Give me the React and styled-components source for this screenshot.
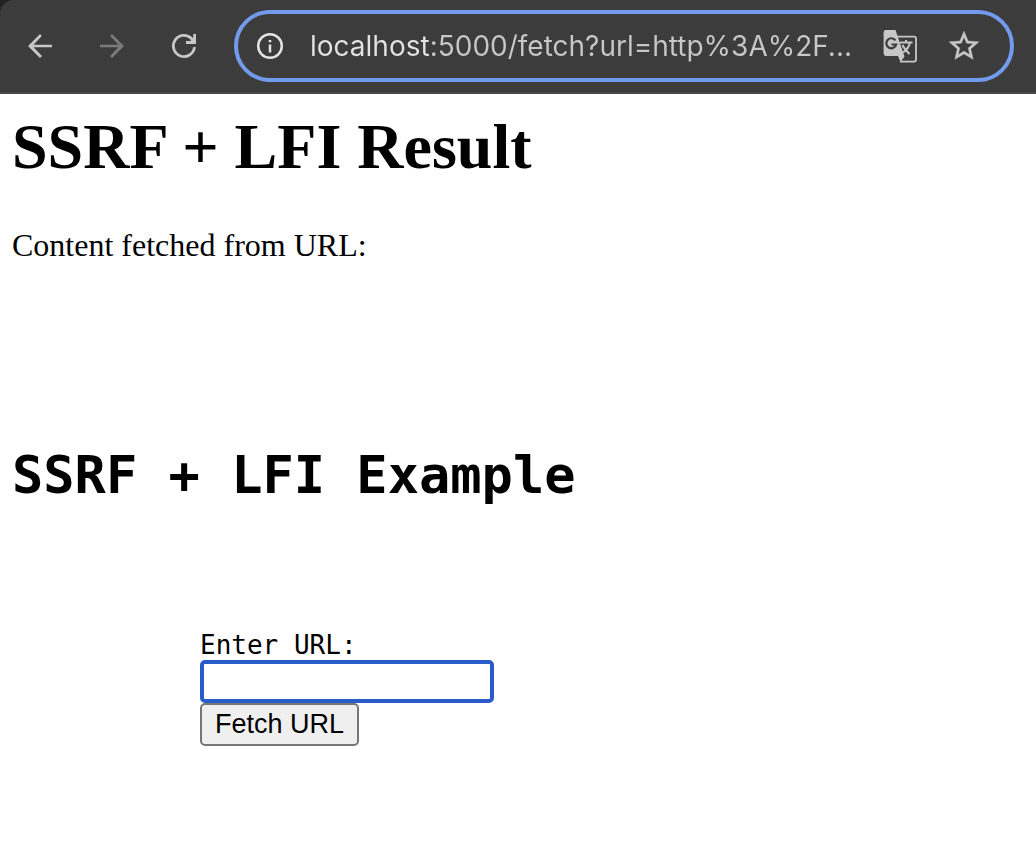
import React, { useState } from "react";
import styled, { createGlobalStyle } from "styled-components";

const GlobalStyle = createGlobalStyle`
  *, *::before, *::after { box-sizing: border-box; }
  body { margin: 0; background: #fff; color: #000; }
`;

const Frame = styled.div`
  background: #202121;
`;

const Toolbar = styled.header`
  display: flex;
  align-items: center;
  gap: 36px;
  padding: 10px 22px 10px;
  height: 94px;
  background: #3c3c3c;
  border-bottom: 2px solid #474747;
  border-top-left-radius: 14px;
`;

const IconButton = styled.button`
  flex: none;
  display: grid;
  place-items: center;
  width: 36px;
  height: 36px;
  padding: 0;
  border: 0;
  background: none;
  color: ${(p) => (p.$dim ? "#7b7b7b" : "#c7c7c7")};
`;

const Icon = styled.svg`
  display: block;
  width: 36px;
  height: 36px;
`;

const AddressBar = styled.div`
  flex: 1;
  min-width: 0;
  display: flex;
  align-items: center;
  gap: 28px;
  height: 72px;
  padding: 0 28px 0 14px;
  margin-left: -4px;
  border: 4px solid #729bed;
  border-radius: 36px;
`;

const AddressInput = styled.input`
  flex: 1;
  min-width: 0;
  height: 44px;
  padding: 0;
  margin-left: -6px;
  border: 0;
  outline: 0;
  font: 28px/44px Inter, "Liberation Sans", sans-serif;
  color: #c7c7c7;
  background: linear-gradient(90deg, #e3e3e3 120px, #c7c7c7 120px);
  background-clip: text;
  -webkit-text-fill-color: transparent;
`;

const Page = styled.main`
  padding: 16px 12px;
`;

const Title = styled.h1`
  margin: 0 0 43px;
  font: bold 64px/74px "Liberation Serif", serif;
`;

const Note = styled.p`
  margin: 0;
  font: 32px/37px "Liberation Serif", serif;
`;

const Fetched = styled.section`
  padding-top: 181px;
  font: 26px/30px "DejaVu Sans Mono", monospace;
`;

const Subtitle = styled.h2`
  margin: 0 0 124px;
  font-size: 52px;
  line-height: 61px;
`;

const Form = styled.form`
  display: flex;
  flex-direction: column;
  align-items: flex-start;
  padding-left: 188px;
`;

const UrlInput = styled.input`
  width: 294px;
  height: 43px;
  padding: 2px 8px;
  border: 4px solid #285cc9;
  border-radius: 5px;
  outline: 0;
  font: 27px/31px "Liberation Sans", sans-serif;
`;

const Submit = styled.button`
  height: 43px;
  padding: 0 13px;
  border: 2px solid #767676;
  border-radius: 5px;
  background: #efefef;
  color: #000;
  font: 27px/31px "Liberation Sans", sans-serif;
`;

function BackIcon() {
  return (
    <Icon viewBox="0 0 24 24" fill="currentColor" aria-hidden="true">
      <path d="M20 11.1H7.7l5.5-5.7L12 4l-8 8 8 8 1.3-1.4-5.6-5.7H20z" />
    </Icon>
  );
}

function ForwardIcon() {
  return (
    <Icon viewBox="0 0 24 24" fill="currentColor" aria-hidden="true">
      <path d="M4 11.1h12.3l-5.5-5.7L12 4l8 8-8 8-1.3-1.4 5.6-5.7H4z" />
    </Icon>
  );
}

function ReloadIcon() {
  return (
    <Icon viewBox="0 0 36 36" fill="none" stroke="currentColor" strokeWidth="2.8" aria-hidden="true">
      <path d="M28.5 19.2A10.6 10.6 0 1 1 25.5 10.5L28 13.5" />
      <path d="M28.6 6v8.5H20" />
      <path d="M24 13.5l4-4.500v5z" fill="currentColor" stroke="none" />
    </Icon>
  );
}

function InfoIcon() {
  return (
    <Icon viewBox="0 0 36 36" fill="none" stroke="#e3e3e3" strokeWidth="2.5" aria-hidden="true">
      <circle cx="18" cy="18" r="11.8" />
      <path d="M18 16.5v8M18 12v2.3" />
    </Icon>
  );
}

function TranslateIcon() {
  return (
    <Icon viewBox="0 0 36 36" aria-hidden="true">
      <path d="M14 8.6h18a2 2 0 0 1 2 2v21a2 2 0 0 1-2 2H18" fill="none" stroke="currentColor" strokeWidth="1.8" />
      <path d="M4 2h9.5l2 6 7 20.5L18.5 34l-2.500-6H4a2.4 2.4 0 0 1-2.4-2.4V4.4A2.4 2.4 0 0 1 4 2z" fill="currentColor" />
      <path d="M13.4 12.3a5 5 0 1 0 .8 4.2h-4.7" fill="none" stroke="#3c3c3c" strokeWidth="2.2" />
      <path d="M18 14.5h12.5M24 12v2.5M28 14.5c-1 5-4 8-7 10M20.5 17c1.5 3.5 4 6 7 9" fill="none" stroke="currentColor" strokeWidth="2" />
    </Icon>
  );
}

function StarIcon() {
  return (
    <Icon viewBox="0 0 24 24" fill="currentColor" stroke="currentColor" strokeWidth=".2" aria-hidden="true">
      <path d="M22 9.24l-7.19-.62L12 2 9.19 8.63 2 9.24l5.46 4.73L5.82 21 12 17.27 18.18 21l-1.63-7.03L22 9.24zM12 15.4l-3.76 2.27 1-4.28-3.32-2.88 4.38-.38L12 6.1l1.71 4.04 4.38.38-3.32 2.88 1 4.28L12 15.4z" />
    </Icon>
  );
}

export default function App() {
  const [address, setAddress] = useState("localhost:5000/fetch?url=http%3A%2F...");
  return (
    <>
      <GlobalStyle />
      <Frame>
        <Toolbar>
          <IconButton type="button" aria-label="Back"><BackIcon /></IconButton>
          <IconButton type="button" aria-label="Forward" $dim><ForwardIcon /></IconButton>
          <IconButton type="button" aria-label="Reload"><ReloadIcon /></IconButton>
          <AddressBar>
            <IconButton type="button" aria-label="Site information"><InfoIcon /></IconButton>
            <AddressInput aria-label="Address" value={address} onChange={(e) => setAddress(e.target.value)} />
            <IconButton type="button" aria-label="Translate this page"><TranslateIcon /></IconButton>
            <IconButton type="button" aria-label="Bookmark this page"><StarIcon /></IconButton>
          </AddressBar>
        </Toolbar>
      </Frame>
      <Page>
        <Title>SSRF + LFI Result</Title>
        <Note>Content fetched from URL:</Note>
        <Fetched>
          <Subtitle>SSRF + LFI Example</Subtitle>
          <Form onSubmit={(e) => e.preventDefault()}>
            <label htmlFor="url">Enter URL:</label>
            <UrlInput id="url" type="text" name="url" />
            <Submit type="submit">Fetch URL</Submit>
          </Form>
        </Fetched>
      </Page>
    </>
  );
}
